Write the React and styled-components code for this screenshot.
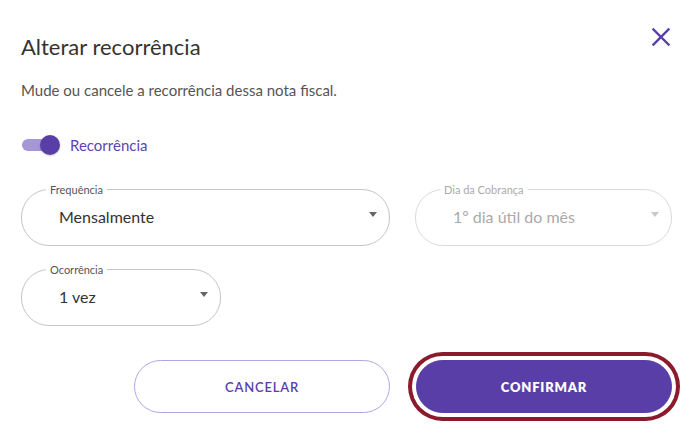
import React, { useState } from 'react';
import styled, { createGlobalStyle } from 'styled-components';

const GlobalStyle = createGlobalStyle`
  body {
    margin: 0;
    background: #fff;
    font-family: Lato, "Noto Sans", sans-serif;
  }
`;

const Dialog = styled.div`
  width: 694px;
  height: 443px;
  box-sizing: border-box;
  padding: 27px 22px 0 21px;
  display: flex;
  flex-direction: column;
`;

const Header = styled.div`
  display: flex;
  justify-content: space-between;
  align-items: flex-start;
`;

const Title = styled.h2`
  margin: 6px 0 0;
  font-size: 22px;
  font-weight: 400;
  color: #333;
`;

const CloseButton = styled.button`
  border: 0;
  background: none;
  padding: 0;
  margin: 0 1px 0 0;
  width: 20px;
  height: 20px;
  cursor: pointer;
  display: flex;
`;

const Subtitle = styled.p`
  margin: 21px 0 0;
  font-size: 15px;
  color: #555;
`;

const SwitchRow = styled.label`
  display: flex;
  align-items: center;
  gap: 9px;
  margin-top: 37px;
  cursor: pointer;
`;

const Track = styled.span`
  position: relative;
  display: block;
  width: 34px;
  height: 12px;
  margin: 0 5px 0 1px;
  border-radius: 6px;
  background: ${p => (p.$on ? '#a597d6' : '#ccc')};
`;

const Thumb = styled.span`
  position: absolute;
  top: -4px;
  left: ${p => (p.$on ? '18px' : '-2px')};
  width: 20px;
  height: 20px;
  border-radius: 50%;
  background: ${p => (p.$on ? '#5a3ea8' : '#f5f5f5')};
  box-shadow: 0 1px 2px rgba(0, 0, 0, 0.2);
`;

const SwitchLabel = styled.span`
  font-size: 15px;
  color: #5f43b2;
`;

const FieldRow = styled.div`
  display: flex;
  gap: 25px;
  margin-top: ${p => p.$top}px;
`;

const Field = styled.fieldset`
  margin: 0;
  width: ${p => p.$width}px;
  box-sizing: border-box;
  padding: 0 12px 9px 24px;
  border: 1px solid ${p => (p.$disabled ? '#dadada' : '#c4c4c4')};
  border-radius: 28px;
`;

const Legend = styled.legend`
  padding: 0 4px;
  font-size: 11px;
  line-height: 13px;
  color: ${p => (p.$disabled ? '#aaa' : '#555')};
`;

const SelectBox = styled.div`
  height: 40px;
  display: flex;
  align-items: center;
  justify-content: space-between;
  padding-left: 13px;
  font-size: 16px;
  color: ${p => (p.$disabled ? '#aaa' : '#333')};
`;

const Arrow = styled.span`
  width: 0;
  height: 0;
  border-left: 4.5px solid transparent;
  border-right: 4.5px solid transparent;
  border-top: 5px solid ${p => (p.$disabled ? '#c8c8c8' : '#666')};
  margin-top: -3px;
`;

const Actions = styled.div`
  display: flex;
  justify-content: flex-end;
  gap: 26px;
  margin-top: 34px;
`;

const Button = styled.button`
  width: 256px;
  height: 53px;
  border-radius: 27px;
  font-family: Lato, "Noto Sans", sans-serif;
  font-size: 13px;
  letter-spacing: 0.8px;
  cursor: pointer;
  border: 1px solid ${p => (p.$primary ? '#5a3ea8' : '#b3a5e2')};
  background: ${p => (p.$primary ? '#5a3ea8' : '#fff')};
  color: ${p => (p.$primary ? '#fff' : '#5a3ea8')};
  font-weight: ${p => (p.$primary ? 800 : 600)};
  box-shadow: ${p => (p.$primary ? '0 0 0 4px #fff, 0 0 0 8px #8b1a2d' : 'none')};
`;

function Select({ label, value, width, disabled }) {
  return (
    <Field $width={width} $disabled={disabled}>
      <Legend $disabled={disabled}>{label}</Legend>
      <SelectBox $disabled={disabled}>
        <span>{value}</span>
        <Arrow $disabled={disabled} />
      </SelectBox>
    </Field>
  );
}

export default function App() {
  const [on, setOn] = useState(true);

  return (
    <>
      <GlobalStyle />
      <Dialog>
        <Header>
          <Title>Alterar recorrência</Title>
          <CloseButton aria-label="Fechar">
            <svg width="20" height="20" viewBox="0 0 20 20">
              <path d="M2.5 2.5 L17.5 17.5 M17.5 2.5 L2.5 17.5" stroke="#5a3ea8" strokeWidth="2.4" strokeLinecap="square" />
            </svg>
          </CloseButton>
        </Header>
        <Subtitle>Mude ou cancele a recorrência dessa nota fiscal.</Subtitle>
        <SwitchRow onClick={() => setOn(!on)}>
          <Track $on={on}>
            <Thumb $on={on} />
          </Track>
          <SwitchLabel>Recorrência</SwitchLabel>
        </SwitchRow>
        <FieldRow $top={29}>
          <Select label="Frequência" value="Mensalmente" width={369} />
          <Select label="Dia da Cobrança" value="1º dia útil do mês" width={257} disabled />
        </FieldRow>
        <FieldRow $top={17}>
          <Select label="Ocorrência" value="1 vez" width={200} />
        </FieldRow>
        <Actions>
          <Button>CANCELAR</Button>
          <Button $primary>CONFIRMAR</Button>
        </Actions>
      </Dialog>
    </>
  );
}
